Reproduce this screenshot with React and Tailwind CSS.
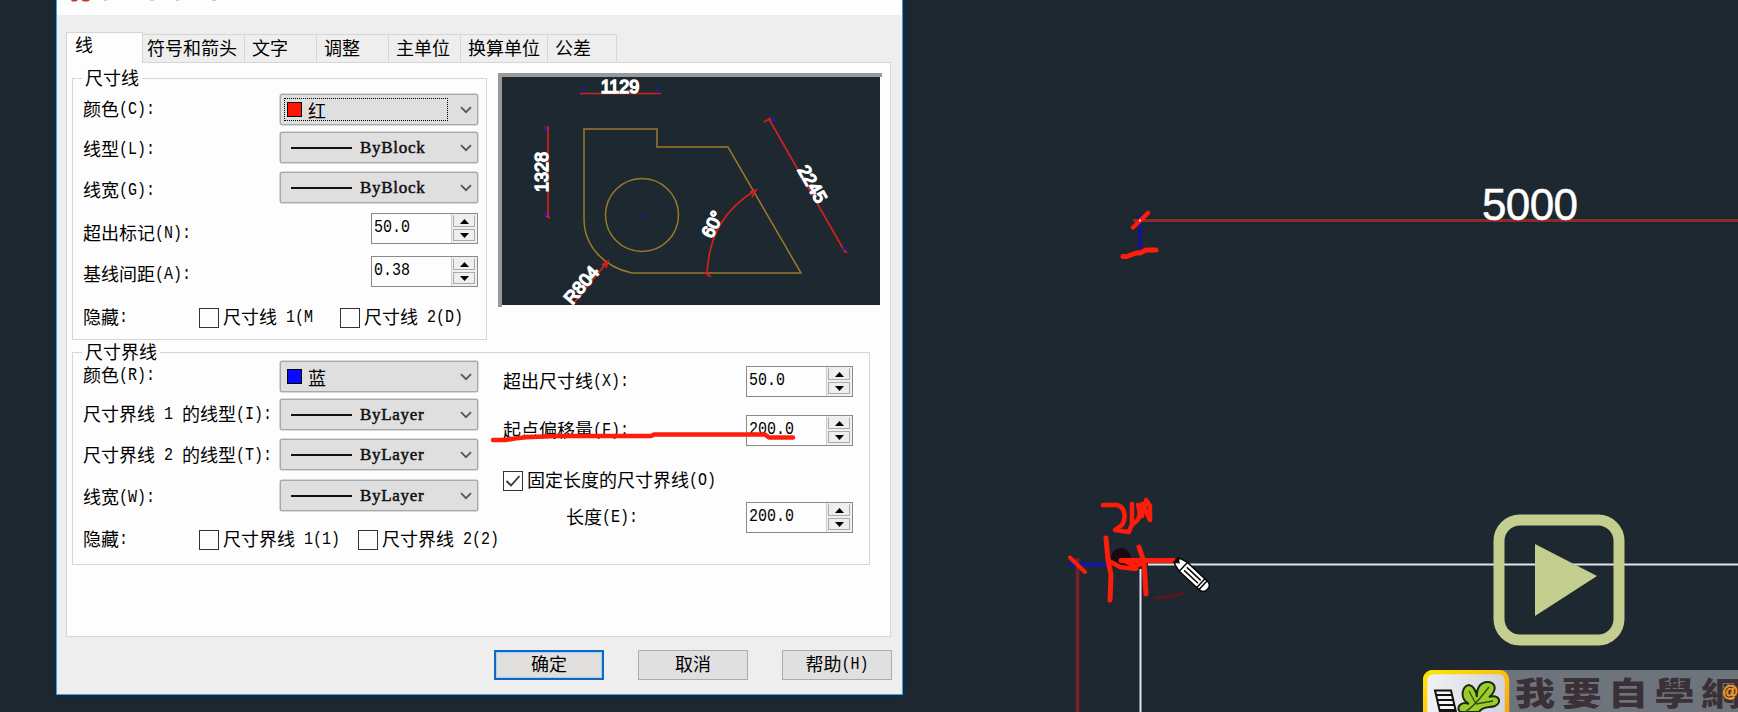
import React from 'react';

const CJK = "font-['Noto_Sans_CJK_SC',sans-serif]";

function T({ children }) {
  const parts = String(children).match(/[\u4e00-\u9fff]+|[^\u4e00-\u9fff]+/g) || [];
  return (
    <span className="inline-flex items-center whitespace-pre text-[18px] leading-[20px] text-black">
      {parts.map((p, i) =>
        /[\u4e00-\u9fff]/.test(p) ? (
          <span key={i} className={CJK}>{p}</span>
        ) : (
          <span
            key={i}
            className="relative top-[2px] inline-block scale-y-[1.2] font-['Liberation_Mono',monospace] text-[15px]"
          >
            {p}
          </span>
        )
      )}
    </span>
  );
}

function Select({ swatch, text, focused }) {
  return (
    <div className="flex h-[31px] w-[198px] shrink-0 items-center rounded-[2px] border border-[#a9a9a9] bg-[#dfdfdf] shadow-[0_0_0_0.5px_#b4b4b4]">
      {swatch ? (
        <div
          className={
            'ml-[3px] flex h-[23px] w-[164px] items-center border pl-[2px] ' +
            (focused ? 'border-dotted border-black' : 'border-transparent')
          }
        >
          <span className={'mr-[6px] h-[15px] w-[15px] border border-black ' + swatch} />
          <T>{text}</T>
        </div>
      ) : (
        <div className="flex w-[167px] items-center">
          <span className="ml-[10px] mr-[8px] h-[2px] w-[61px] bg-[#111]" />
          <span className="whitespace-nowrap font-['Liberation_Serif',serif] text-[17px] tracking-[0.7px] leading-[20px] text-[#111] [-webkit-text-stroke:0.5px_#111]">
            {text}
          </span>
        </div>
      )}
      <svg className="ml-auto mr-[5px]" width="12" height="8" viewBox="0 0 12 8">
        <path d="M1 1.2 L6 6.2 L11 1.2" fill="none" stroke="#555" strokeWidth="1.7" />
      </svg>
    </div>
  );
}

function Spinner({ value }) {
  return (
    <div className="flex h-[31px] w-[107px] shrink-0 border border-[#8a8a8a] bg-[#fdfdfd]">
      <div className="flex flex-1 items-center pb-[6px] pl-[2px]">
        <T>{value}</T>
      </div>
      <div className="flex w-[26px] flex-col justify-between border-l border-[#ccc] bg-[#f0f0f0] pb-[2px] pl-px pr-[2px] pt-px">
        <div className="flex h-[12px] items-center justify-center border border-t-[#eee] border-[#aaa] bg-[#eee]">
          <svg width="9" height="5"><path d="M4.5 0 L9 5 H0 Z" fill="#000" /></svg>
        </div>
        <div className="flex h-[12px] items-center justify-center border border-[#aaa] bg-[#eee]">
          <svg width="9" height="5"><path d="M4.5 5 L9 0 H0 Z" fill="#000" /></svg>
        </div>
      </div>
    </div>
  );
}

function Check({ label, checked }) {
  return (
    <div className="flex items-center">
      <span className="flex h-[20px] w-[20px] items-center justify-center border-[1.5px] border-[#333] bg-[#fdfdfd]">
        {checked && (
          <svg width="16" height="14" viewBox="0 0 16 14">
            <path d="M1.5 7 L6 11.5 L14.5 2" fill="none" stroke="#333" strokeWidth="1.8" />
          </svg>
        )}
      </span>
      <span className="ml-[4px]"><T>{label}</T></span>
    </div>
  );
}

function Row({ label, cls = '', labelCls = '', children }) {
  return (
    <div className={'flex h-[31px] items-center justify-between ' + cls}>
      <span className={labelCls}><T>{label}</T></span>
      {children}
    </div>
  );
}

function Legend({ children }) {
  return (
    <span className="absolute -top-[12px] left-[9px] bg-[#fdfdfd] px-[3px] leading-[20px]">
      <T>{children}</T>
    </span>
  );
}

function Preview() {
  return (
    <div className="h-[234px] w-[384px] border-l-[4px] border-t-[4px] border-[#999] bg-[#1e2830] shadow-[inset_-2px_-2px_0_#fdfdfd]">
      <svg width="380" height="230" viewBox="502 77 380 230" className="block">
        <g fill="none" stroke="#9a7a26" strokeWidth="1.5">
          <path d="M584 129 H657 V147 H728 L801 273 H632 C604 267 584 246 584 219 Z" />
          <circle cx="642" cy="215" r="36.5" />
        </g>
        <g fill="none" stroke="#d4201c" strokeWidth="1.7">
          <path d="M580 93.5 H661 M548 126 V218 M544 127 L549 129 M545 215 L550 218 M769 119 L845 252 M764 122 L771 118 M842 247 L847 253 M574 303 L608 261 M602 265 L608 261 L606 268" />
          <path d="M707 274 C709 235 724 209 756 190 M704 272 L711 277 M750 192 L756 190 L752 197" />
        </g>
        <g fill="#2018c8">
          <rect x="582" y="89" width="4" height="2" /><rect x="656" y="89" width="4" height="2" />
          <rect x="544" y="127" width="3" height="3" /><rect x="544" y="213" width="3" height="3" />
          <rect x="771" y="118" width="3" height="3" /><rect x="843" y="247" width="3" height="3" />
          <rect x="641" y="214" width="2" height="2" />
        </g>
        <g fill="#fff" stroke="#fff" strokeWidth="1.5" fontFamily="Liberation Sans, sans-serif" fontSize="18" textAnchor="middle">
          <text x="620" y="92.500">1129</text>
          <text transform="translate(548 172) rotate(-90)">1328</text>
          <text transform="translate(807 187) rotate(60)">2245</text>
          <text transform="translate(718 227) rotate(-64)">60°</text>
          <text transform="translate(586 289) rotate(-50)">R804</text>
        </g>
      </svg>
    </div>
  );
}

const TABS = [
  ['符号和箭头', 'w-[102px] pl-[4px]'],
  ['文字', 'w-[72px] pl-[7px]'],
  ['调整', 'w-[72px] pl-[7px]'],
  ['主单位', 'w-[72px] pl-[7px]'],
  ['换算单位', 'w-[87px] pl-[7px]'],
  ['公差', 'w-[69px] pl-[7px]'],
];

function Dialog() {
  return (
    <div className="absolute left-[56px] top-0 flex h-[695px] w-[847px] flex-col border-x border-b border-[#3d9fdc] bg-[#eeeeee] shadow-[0_0_5px_1px_#0b2c4a]">
      <div className="flex h-[15px] shrink-0 items-start gap-[8px] bg-[#fdfdfd] pl-[13px]">
        <svg width="400" height="3">
          <path d="M1 0 H8 L6 1.500 H2 Z M11 0 H20 L18 1.500 H14 Z" fill="#c0392b" />
          <path d="M34 0 h3 M80 0 h4 M106 0 h3 M142 0 h4" stroke="#999" />
        </svg>
      </div>
      <div className="mt-[17px] flex h-[30px] shrink-0 items-end pl-[9px]">
        <div className="relative z-10 -mb-px flex h-[31px] w-[77px] items-start border border-b-0 border-[#d6d6d6] bg-[#fdfdfd] pl-[8px] pt-px leading-[20px]">
          <T>线</T>
        </div>
        {TABS.map(([t, c]) => (
          <div key={t} className={'flex h-[28px] items-center border-r border-t border-[#d6d6d6] pb-[3px] ' + c}>
            <T>{t}</T>
          </div>
        ))}
      </div>
      <div className="ml-[9px] flex h-[575px] w-[825px] shrink-0 flex-col border border-[#d6d6d6] bg-[#fdfdfd] pl-[5px] pt-[10px]">
        <div className="flex">
          <div className="relative mt-[5px] flex h-[262px] w-[415px] flex-col border border-[#d6d6d6] pl-[10px] pr-[8px]">
            <Legend>尺寸线</Legend>
            <Row label="颜色(C):" cls="mt-[15px]"><Select swatch="bg-[#ff1400]" text="红" focused /></Row>
            <Row label="线型(L):" cls="mt-[7px]" labelCls="translate-y-[2px]"><Select text="ByBlock" /></Row>
            <Row label="线宽(G):" cls="mt-[9px]" labelCls="translate-y-[3px]"><Select text="ByBlock" /></Row>
            <Row label="超出标记(N):" cls="mt-[10px]" labelCls="translate-y-[5px]"><Spinner value="50.0" /></Row>
            <Row label="基线间距(A):" cls="mt-[12px]" labelCls="translate-y-[3px]"><Spinner value="0.38" /></Row>
            <div className="mt-[15px] flex h-[31px] items-center">
              <span className="w-[116px]"><T>隐藏:</T></span>
              <span className="w-[141px]"><Check label="尺寸线 1(M" /></span>
              <Check label="尺寸线 2(D)" />
            </div>
          </div>
          <div className="ml-[11px]"><Preview /></div>
        </div>
        <div className="relative mt-[12px] flex h-[213px] w-[798px] border border-[#d6d6d6] pl-[10px]">
          <Legend>尺寸界线</Legend>
          <div className="w-[395px] shrink-0">
            <Row label="颜色(R):" cls="mt-[8px]" labelCls="-translate-y-px"><Select swatch="bg-[#0a0aff]" text="蓝" /></Row>
            <Row label="尺寸界线 1 的线型(I):" cls="mt-[7px]"><Select text="ByLayer" /></Row>
            <Row label="尺寸界线 2 的线型(T):" cls="mt-[9px]" labelCls="translate-y-px"><Select text="ByLayer" /></Row>
            <Row label="线宽(W):" cls="mt-[10px]" labelCls="translate-y-[2px]"><Select text="ByLayer" /></Row>
            <div className="mt-[13px] flex h-[31px] items-center">
              <span className="w-[116px] shrink-0"><T>隐藏:</T></span>
              <span className="w-[159px] shrink-0"><Check label="尺寸界线 1(1)" /></span>
              <span className="shrink-0"><Check label="尺寸界线 2(2)" /></span>
            </div>
          </div>
          <div className="ml-[25px] w-[350px]">
            <Row label="超出尺寸线(X):" cls="mt-[13px]"><Spinner value="50.0" /></Row>
            <Row label="起点偏移量(F):" cls="mt-[18px]"><Spinner value="200.0" /></Row>
            <div className="mt-[19px] flex h-[31px] items-center"><Check label="固定长度的尺寸界线(O)" checked /></div>
            <Row label="长度(E):" cls="mt-[6px] pl-[63px]"><Spinner value="200.0" /></Row>
          </div>
        </div>
      </div>
      <div className="mt-[13px] flex justify-end gap-[34px] pr-[10px]">
        <button className="h-[30px] w-[110px] border-[2px] border-[#0f68bf] bg-[#e0dfde] shadow-[inset_0_0_0_1px_#9bd3fa]"><T>确定</T></button>
        <button className="h-[30px] w-[110px] border border-[#acacac] bg-[#e0e0e0]"><T>取消</T></button>
        <button className="h-[30px] w-[110px] border border-[#acacac] bg-[#e0e0e0]"><T>帮助(H)</T></button>
      </div>
    </div>
  );
}

function Drawing() {
  return (
    <svg className="absolute left-0 top-0" width="1738" height="712" viewBox="0 0 1738 712">
      <path d="M1133 220.500 H1738" stroke="#0f2b34" strokeWidth="9" />
      <path d="M1133 220.500 H1738" stroke="#9c2424" strokeWidth="3" />
      <path d="M1077.500 558 V712" stroke="#7e2020" strokeWidth="3.500" />
      <path d="M1140 214 V250" stroke="#15158c" strokeWidth="4" />
      <path d="M1069 564.500 H1107" stroke="#1018a0" strokeWidth="4" />
      <path d="M1148 564.500 H1738 M1140.500 569 V712" stroke="#dfe5ee" strokeWidth="2" fill="none" />
      <text x="1482" y="220" fill="#fff" stroke="#fff" strokeWidth="0.5" fontFamily="Liberation Sans, sans-serif" fontSize="44" textLength="96">5000</text>
      <circle cx="1121" cy="558" r="10" fill="#170a10" />
    </svg>
  );
}

function Ink() {
  return (
    <svg className="pointer-events-none absolute left-0 top-0" width="1738" height="712" viewBox="0 0 1738 712">
      <g fill="none" stroke="#ff1c0a" strokeLinecap="round" strokeLinejoin="round">
        <path strokeWidth="4.500" d="M493 440 H506 C525 436 540 436.500 560 436 H651 L654 434.500 H765 L769 437.500 H793" />
        <path strokeWidth="4.500" d="M1133 227.500 L1148 213" />
        <path strokeWidth="5" d="M1123 256.500 H1127 L1136 253 H1140 L1146 250 H1156" />
        <path strokeWidth="4" d="M1070 557.500 L1085 572" />
        <path strokeWidth="5" d="M1106 538 L1108 560 L1111 575 L1110 600" />
        <path strokeWidth="5" d="M1139 547 L1144 562 L1146 594" />
        <path strokeWidth="5" d="M1121 560.500 H1174" />
        <path strokeWidth="4.500" d="M1109 561 L1120 567 L1136 569 M1124 561 L1136 566 L1144 563" />
        <path strokeWidth="4.500" d="M1103 505 H1117 C1126 507 1126 519 1122 525 L1115 530 L1129 532 L1132 524 V504 M1133 524 C1140 520 1141 514 1138 505 L1142 516 M1142 504 L1150 520 V506 L1146 500 L1144 512" />
      </g>
      <path d="M1155 597.500 H1166 L1184 593" fill="none" stroke="#641317" strokeWidth="2.500" />
      <circle cx="1140" cy="220.500" r="1" fill="#fff" />
      <g transform="translate(1176 560) rotate(43)" fill="#fff" stroke="#080808" strokeWidth="1.500">
        <path d="M0 0 L2 -4 L10 -6 H37 Q43 -6 43 0 Q43 6 37 6 H10 L2 4 Z" />
        <path d="M10 -6 V6 M13 -2 H32 M13 2 H32 M34 -6 V6 M37 -6 V6" />
        <path d="M0 -3 L4 0 L0 3 Z" fill="#080808" />
      </g>
    </svg>
  );
}

function Watermark() {
  return (
    <div className="absolute left-[1423px] top-[670px] flex h-[42px] w-[315px]">
      <div className="absolute left-[60px] top-0 h-[42px] w-[255px] bg-[#6e747b]" />
      <svg className="relative" width="88" height="42" viewBox="0 0 88 42">
        <defs>
          <linearGradient id="edge" x1="0" y1="0" x2="1" y2="1">
            <stop offset="0" stopColor="#ffe600" /><stop offset="1" stopColor="#f59a1a" />
          </linearGradient>
          <linearGradient id="tile" x1="0" y1="0" x2="1" y2="0">
            <stop offset="0" stopColor="#f2f2f6" /><stop offset="1" stopColor="#d2d2de" />
          </linearGradient>
        </defs>
        <rect x="2" y="2" width="82" height="60" rx="8" fill="url(#tile)" stroke="url(#edge)" strokeWidth="4.500" />
        <g fill="#f4f4f4" stroke="#111" strokeWidth="2">
          <path d="M12 20.500 H28 L33 42 H17 Z" />
          <path d="M13 25 H29 M15 30 H30 M16 35 H31 M17 40 H32" />
        </g>
        <path
          d="M37 42 C32 36 40 31 46 34 C36 29 39 15 46 15 C51 16 53 21 54 27 C53 19 57 11 66 12 C75 14 72 23 66 27 C77 24 79 33 72 36 C66 38 60 36 56 42 Z"
          fill="#9bcb2c" stroke="#1b2c0c" strokeWidth="2"
        />
        <path d="M42 42 C52 36 58 27 66 17 M53 34 L46 21 M53 34 L70 31" fill="none" stroke="#2c4c10" strokeWidth="1.300" />
      </svg>
      <span className="relative left-[4px] top-0 origin-left scale-x-[1.25] whitespace-nowrap font-['Noto_Sans_CJK_TC',sans-serif] text-[32px] font-black leading-[42px] tracking-[5.2px] text-[#3a3036]">
        我要自學網
      </span>
      <span className="absolute left-[298px] top-[13px] flex h-[18px] w-[18px] items-center justify-center font-['Liberation_Sans',sans-serif] text-[16px] font-bold leading-[18px] text-[#f59a1a] [-webkit-text-stroke:0.6px_#f59a1a]">
        @
      </span>
    </div>
  );
}

function PlayButton() {
  return (
    <svg className="absolute left-[1493px] top-[514px]" width="132" height="132" viewBox="0 0 132 132">
      <rect x="6" y="6" width="120" height="120" rx="21" fill="none" stroke="#c4cf8f" strokeWidth="11" />
      <path d="M42 30 L104 62 L42 102 Z" fill="#c4cf8f" />
    </svg>
  );
}

export default function App() {
  return (
    <div className="relative h-[712px] w-[1738px] overflow-hidden bg-[#1e2830]">
      <Drawing />
      <Dialog />
      <Ink />
      <PlayButton />
      <Watermark />
    </div>
  );
}
